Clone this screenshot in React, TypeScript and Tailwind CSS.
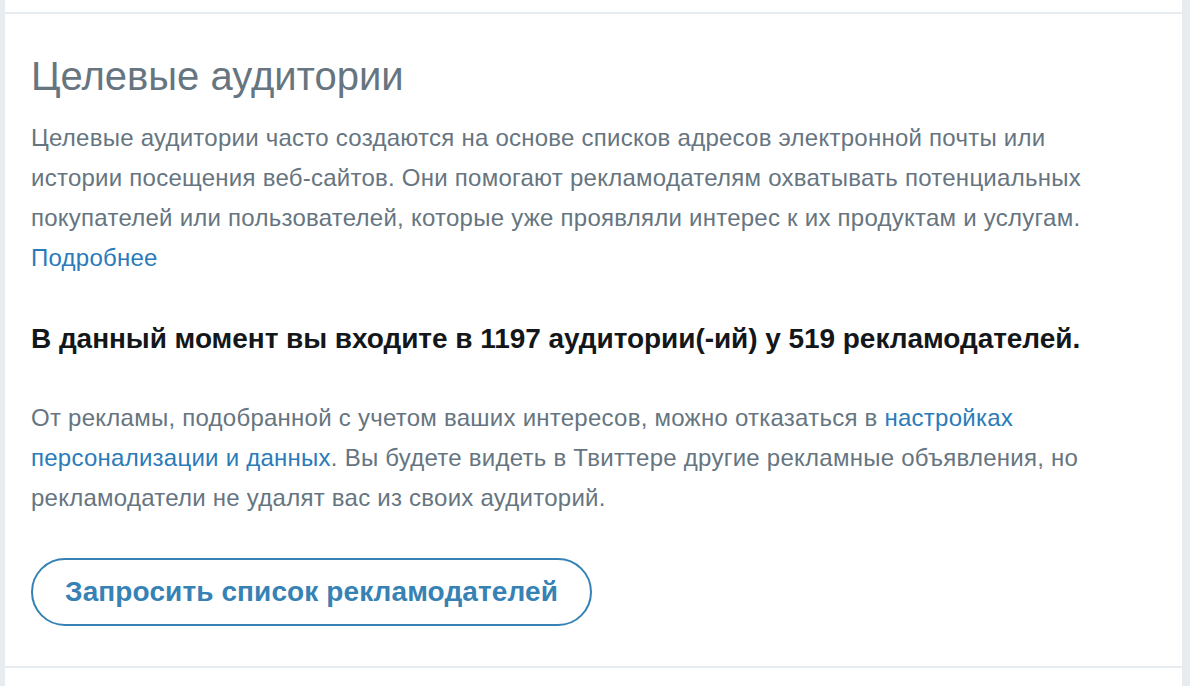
export default function App() {
  return (
    <div
      className="flex min-h-[686px] bg-[#e6ecf0] pl-[5px] pr-[8px]"
      style={{ fontFamily: '"Liberation Sans", Arial, sans-serif' }}
    >
      <div className="flex-1 bg-white pt-[12px]">
        <section className="border-y-2 border-[#e6ecf0] px-[26px] pt-[38px] pb-[40px]">
          <h2 className="text-[40px] leading-[48px] font-normal text-[#66757f]">
            Целевые аудитории
          </h2>
          <p className="mt-[18px] text-[24px] leading-[40px] tracking-[0.25px] text-[#66757f]">
            Целевые аудитории часто создаются на основе списков адресов электронной почты или
            <br />
            истории посещения веб-сайтов. Они помогают рекламодателям охватывать потенциальных
            <br />
            покупателей или пользователей, которые уже проявляли интерес к их продуктам и услугам.
            <br />
            <a href="#" className="text-[#2b7bb9]">
              Подробнее
            </a>
          </p>
          <p className="mt-[41px] text-[28px] leading-[40px] font-bold tracking-[-0.05px] text-[#14171a]">
            В данный момент вы входите в 1197 аудитории(-ий) у 519 рекламодателей.
          </p>
          <p className="mt-[39px] text-[24px] leading-[40px] tracking-[0.25px] text-[#66757f]">
            От рекламы, подобранной с учетом ваших интересов, можно отказаться в{" "}
            <a href="#" className="text-[#2b7bb9]">
              настройках
              <br />
              персонализации и данных
            </a>
            . Вы будете видеть в Твиттере другие рекламные объявления, но
            <br />
            рекламодатели не удалят вас из своих аудиторий.
          </p>
          <button className="mt-[40px] flex h-[68px] w-[561px] items-center justify-center rounded-full border-2 border-[#3682b5] text-[28px] font-bold tracking-[0.1px] text-[#3682b5]">
            Запросить список рекламодателей
          </button>
        </section>
      </div>
    </div>
  );
}
